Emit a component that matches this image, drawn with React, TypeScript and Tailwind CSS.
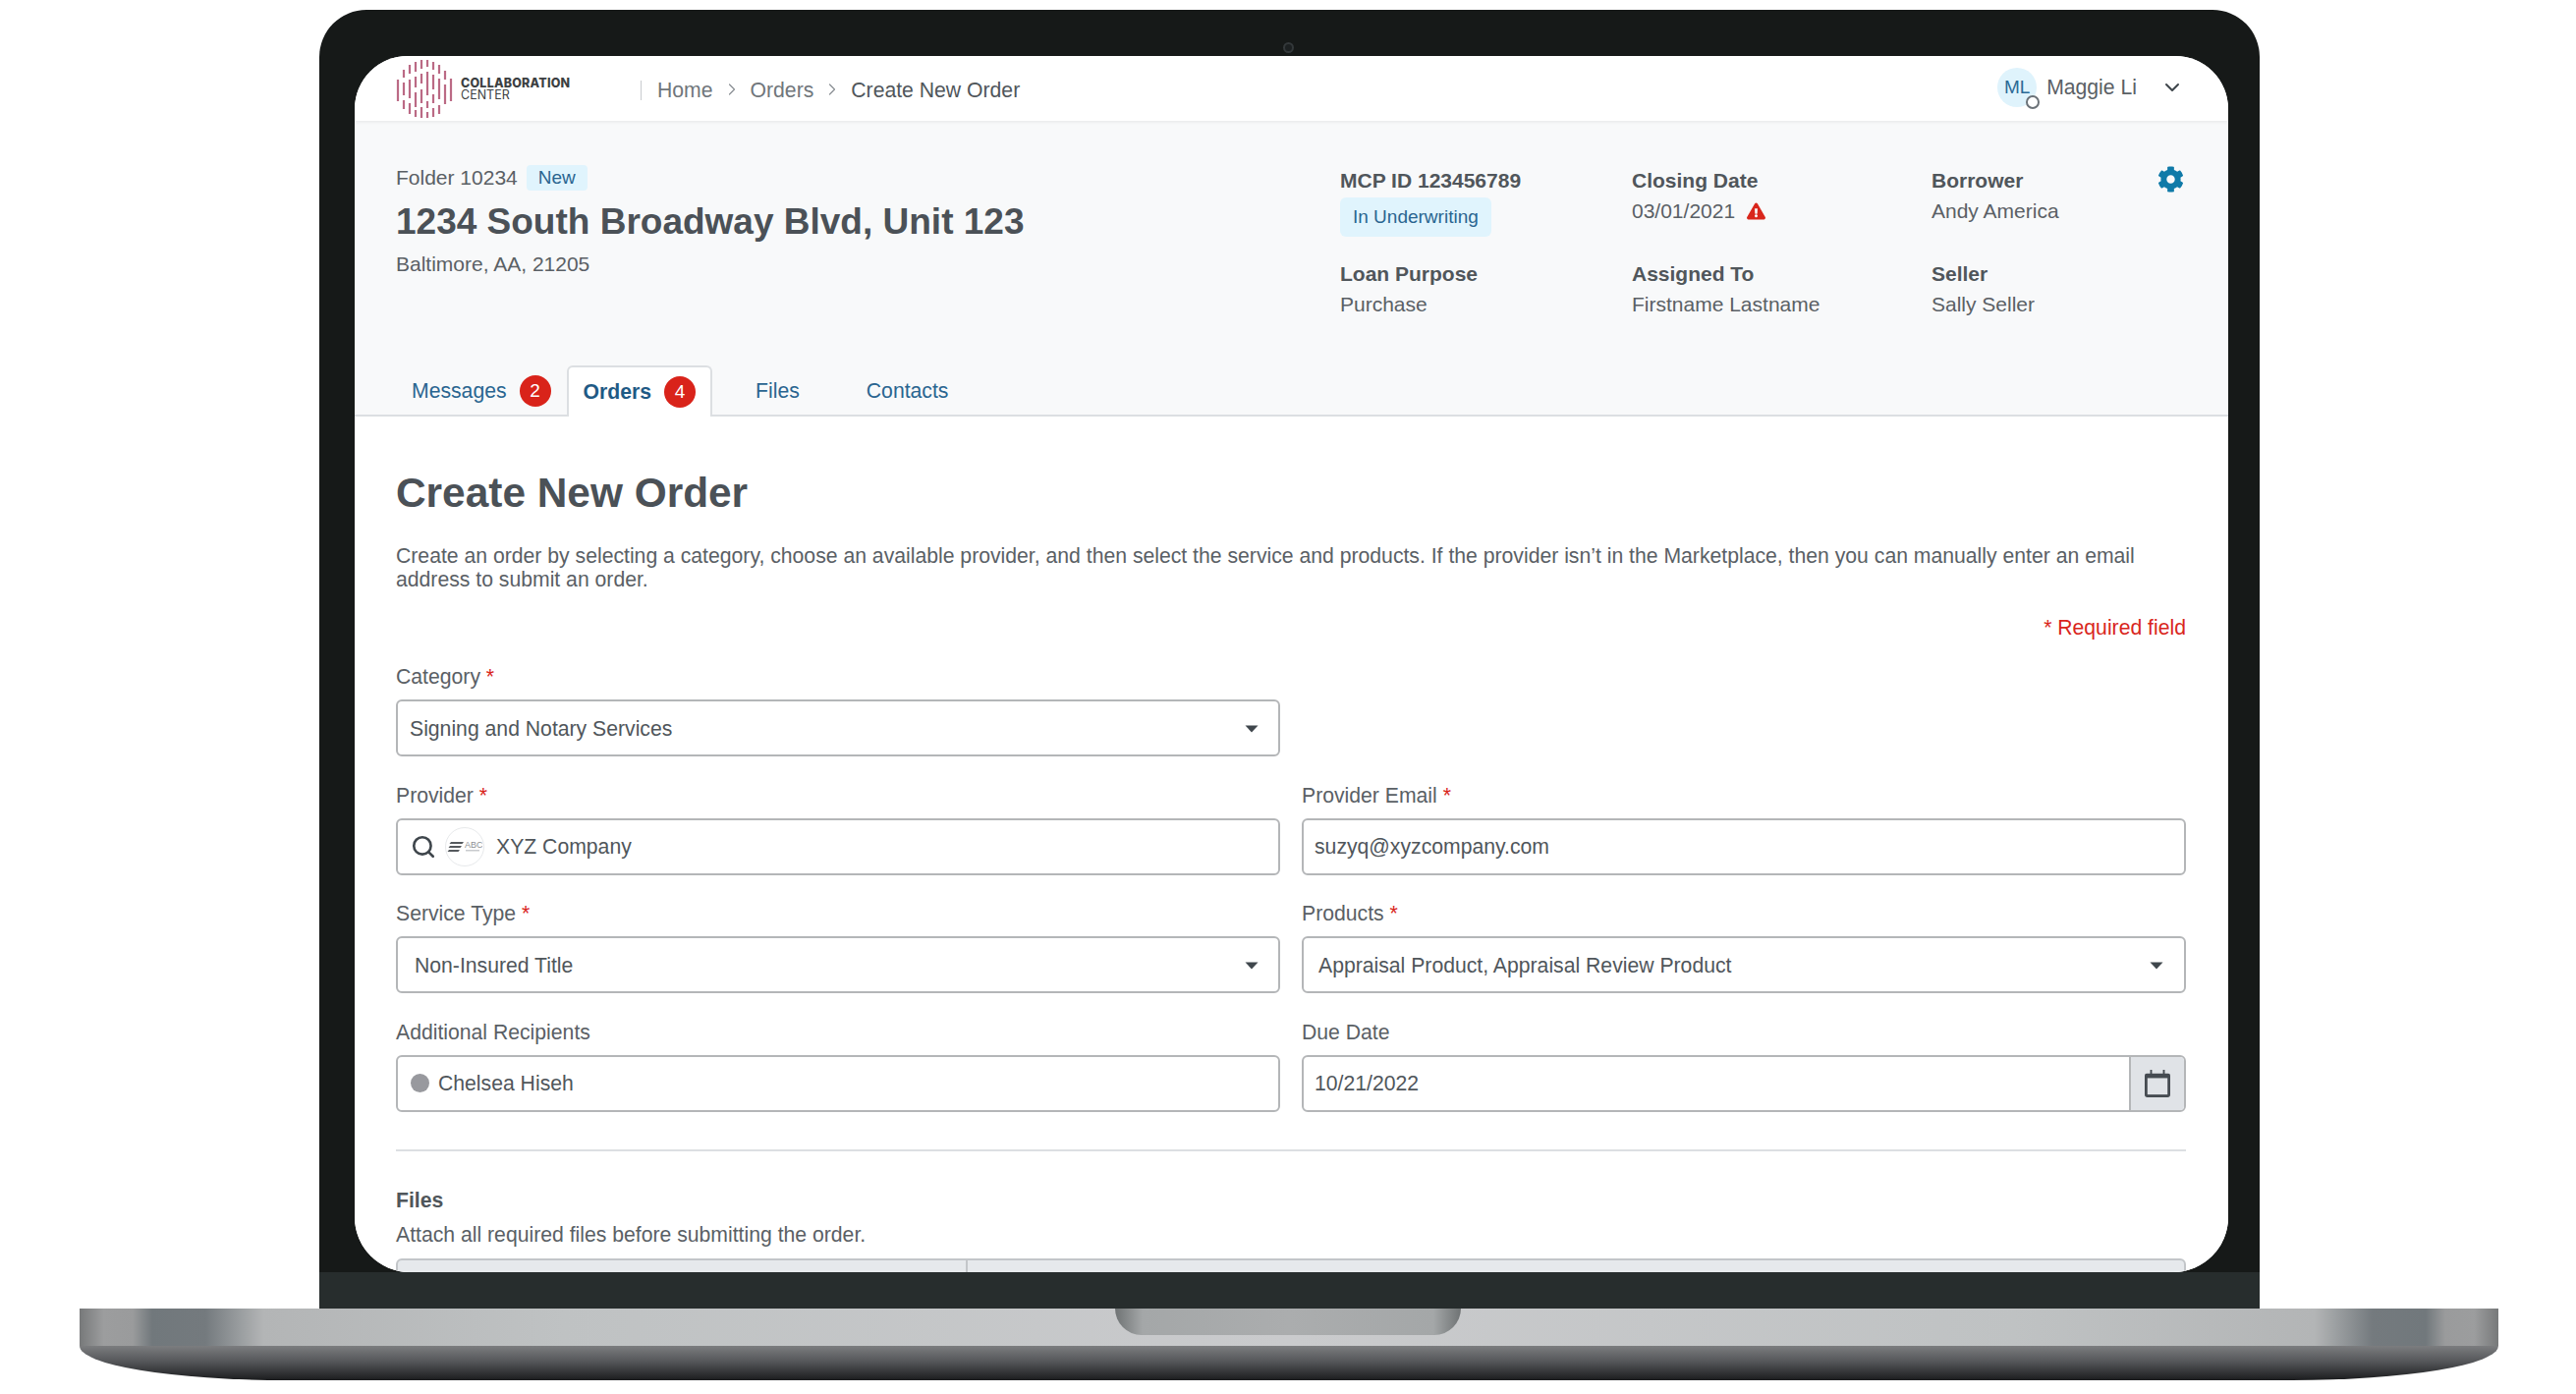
import React from "react";
import { ChevronDown, ChevronRight, Search } from "lucide-react";
import { FaCog, FaExclamationTriangle } from "react-icons/fa";

const logoColumns: [number, number[][]][] = [
  [2, [[20, 42]]],
  [8, [[10, 18], [23, 36], [41, 50]]],
  [14, [[5, 14], [20, 39], [44, 55]]],
  [20, [[2, 12], [17, 28], [33, 48], [51, 58]]],
  [26, [[0, 9], [14, 24], [30, 44], [48, 59]]],
  [32, [[0, 7], [12, 36], [42, 49], [53, 59]]],
  [38, [[2, 10], [15, 30], [35, 44], [49, 58]]],
  [44, [[5, 14], [19, 40], [46, 55]]],
  [50, [[11, 20], [25, 45]]],
  [56, [[19, 42]]],
];

function Logo() {
  return (
    <svg width="58" height="60" viewBox="0 0 58 60" className="shrink-0 mt-[2px]">
      {logoColumns.map(([x, segs]) =>
        segs.map(([a, b], i) => (
          <line key={`${x}-${i}`} x1={x} x2={x} y1={a} y2={b} stroke="#bb6a85" strokeWidth="2.2" />
        ))
      )}
    </svg>
  );
}

function Caret() {
  return (
    <svg width="14" height="8" viewBox="0 0 14 8" className="shrink-0">
      <path d="M0.5 0.5h13L7 7.5z" fill="#3f464c" />
    </svg>
  );
}

function Req() {
  return <span className="text-[#d9261c]"> *</span>;
}

function Field({ label, required, children }: { label: string; required?: boolean; children: React.ReactNode }) {
  return (
    <div className="flex flex-col">
      <div className="h-[24px] leading-[24px] mb-[11px] text-[21.2px] text-[#5a6065]">
        {label}
        {required && <Req />}
      </div>
      {children}
    </div>
  );
}

function Box({ className, children }: { className?: string; children: React.ReactNode }) {
  return (
    <div
      className={`h-[58px] flex items-center bg-white border-2 border-[#b4b6b8] rounded-[6px] text-[21.2px] text-[#50565b] ${className ?? ""}`}
    >
      {children}
    </div>
  );
}

function Meta({ label, children }: { label: string; children: React.ReactNode }) {
  return (
    <div className="flex flex-col">
      <div className="h-[24px] leading-[24px] font-bold text-[21px] text-[#50565b]">{label}</div>
      <div className="mt-[7px] text-[21px] leading-[24px] text-[#5a6065]">{children}</div>
    </div>
  );
}

function Badge({ n }: { n: number }) {
  return (
    <span className="w-[32px] h-[32px] rounded-full bg-[#d9231a] text-white text-[19px] font-normal flex items-center justify-center">
      {n}
    </span>
  );
}

export default function App() {
  return (
    <div
      className="w-[2622px] h-[1419px] bg-white overflow-hidden flex flex-col pt-[10px]"
      style={{ fontFamily: '"Liberation Sans", Arial, sans-serif' }}
    >
      {/* lid */}
      <div className="relative ml-[325px] w-[1975px] h-[1322px] bg-[#161918] rounded-t-[48px] flex flex-col overflow-hidden">
        <div className="absolute left-[981px] top-[33px] w-[11px] h-[11px] rounded-full border-2 border-[#33383a] bg-[#1c2021]" />
        <div className="mt-[47px] mx-[36px] w-[1907px] h-[1238px] bg-white rounded-t-[54px] rounded-b-[56px] overflow-hidden flex flex-col">
          {/* nav */}
          <div className="h-[66px] shrink-0 flex items-center bg-white pl-[42px] pr-[45px] shadow-[0_1px_4px_rgba(0,0,0,0.08)] z-10">
            <Logo />
            <div className="ml-[8px] mt-[2px] flex flex-col font-['Inter'] text-[#3c3f42] leading-[12px] w-[180px]">
              <span className="font-extrabold text-[12.5px] tracking-[0.2px]">COLLABORATION</span>
              <span className="text-[12.5px]">CENTER</span>
            </div>
            <div className="ml-[3px] mt-[3px] w-[1px] h-[20px] bg-[#c9cccf]" />
            <div className="ml-[16px] mt-[3px] flex items-center text-[21.2px] text-[#70767b]">
              <span>Home</span>
              <ChevronRight className="mx-[9px] w-[20px] h-[20px] text-[#8b9095]" strokeWidth={1.5} />
              <span>Orders</span>
              <ChevronRight className="mx-[9px] w-[20px] h-[20px] text-[#8b9095]" strokeWidth={1.5} />
              <span className="text-[#50565b]">Create New Order</span>
            </div>
            <div className="ml-auto flex items-center pb-[2px]">
              <div className="relative w-[40px] h-[40px] rounded-full bg-[#dff3fc] text-[#2b6a96] text-[19px] flex items-center justify-center">
                ML
                <span className="absolute right-[-3px] bottom-[-2px] w-[14px] h-[14px] rounded-full bg-white border-2 border-[#6b7278]" />
              </div>
              <span className="ml-[10px] text-[21.2px] text-[#5a6065]">Maggie Li</span>
              <ChevronDown className="ml-[24px] w-[24px] h-[24px] text-[#3f464c]" strokeWidth={2} />
            </div>
          </div>

          {/* folder header */}
          <div className="h-[301px] shrink-0 bg-[#f8f9fa] border-b-2 border-[#dcdfe2] flex flex-col justify-between">
            <div className="pt-[44px] pl-[42px] pr-[45px] flex">
              <div className="w-[961px] shrink-0 flex flex-col">
                <div className="flex items-center h-[28px]">
                  <span className="text-[21px] text-[#5a6065]">Folder 10234</span>
                  <span className="ml-[9px] h-[26px] px-[12px] rounded-[4px] bg-[#e0f4fd] text-[#2a6590] text-[19px] flex items-center">
                    New
                  </span>
                </div>
                <h1 className="mt-[9px] h-[44px] leading-[44px] text-[37px] font-bold text-[#4b5157]">
                  1234 South Broadway Blvd, Unit 123
                </h1>
                <div className="mt-[9px] text-[21px] leading-[24px] text-[#5a6065]">Baltimore, AA, 21205</div>
              </div>
              <div className="flex-1 grid grid-cols-[297px_305px_1fr] gap-y-[26px] pt-[5px]">
                <div className="flex flex-col">
                  <div className="h-[24px] leading-[24px] font-bold text-[21px] text-[#50565b]">MCP ID 123456789</div>
                  <span className="mt-[5px] self-start h-[40px] px-[13px] rounded-[6px] bg-[#e0f4fd] text-[#2a6590] text-[19px] flex items-center">
                    In Underwriting
                  </span>
                </div>
                <Meta label="Closing Date">
                  <span className="flex items-center">
                    03/01/2021
                    <FaExclamationTriangle className="ml-[12px] w-[19px] h-[18px] text-[#d9261c]" />
                  </span>
                </Meta>
                <div className="relative">
                  <Meta label="Borrower">Andy America</Meta>
                  <FaCog className="absolute right-[0px] top-[-3px] w-[27px] h-[27px] text-[#0f7aa8]" />
                </div>
                <Meta label="Loan Purpose">Purchase</Meta>
                <Meta label="Assigned To">Firstname Lastname</Meta>
                <Meta label="Seller">Sally Seller</Meta>
              </div>
            </div>
            <div className="pl-[42px] flex items-end h-[52px] mb-[-2px] text-[21.2px] text-[#2a6590]">
              <div className="h-full px-[16px] flex items-center gap-[13px]">
                <span>Messages</span>
                <Badge n={2} />
              </div>
              <div className="h-full px-[15px] flex items-center gap-[13px] bg-white border-2 border-b-0 border-[#dcdfe2] rounded-t-[6px] font-bold text-[#1f5a85]">
                <span>Orders</span>
                <Badge n={4} />
              </div>
              <div className="h-full ml-[28px] px-[16px] flex items-center">Files</div>
              <div className="h-full ml-[36px] px-[16px] flex items-center">Contacts</div>
            </div>
          </div>

          {/* content */}
          <div className="flex-1 bg-white pl-[42px] pr-[43px] pt-[54px] overflow-hidden">
            <h2 className="h-[48px] leading-[48px] text-[42.4px] font-bold text-[#4b5157]">Create New Order</h2>
            <p className="mt-[28px] text-[21.2px] leading-[23.5px] text-[#5a6065]">
              Create an order by selecting a category, choose an available provider, and then select the service and products. If the provider isn’t in the Marketplace, then you can manually enter an email address to submit an order.
            </p>
            <div className="mt-[26px] h-[24px] leading-[24px] text-right text-[21.2px] text-[#d9261c]">* Required field</div>

            <div className="mt-[26px] grid grid-cols-2 gap-x-[22px] gap-y-[27.5px]">
              <Field label="Category" required>
                <Box className="pl-[12px] pr-[20px] pt-[1px] justify-between">
                  <span>Signing and Notary Services</span>
                  <Caret />
                </Box>
              </Field>
              <div />
              <Field label="Provider" required>
                <Box className="pl-[13px] pt-[1px]">
                  <Search className="w-[26px] h-[26px] text-[#3f464c]" strokeWidth={2.4} />
                  <span className="ml-[9px] w-[40px] h-[40px] rounded-full border border-[#e7e9eb] flex items-center justify-center">
                    <svg width="36" height="16" viewBox="0 0 36 16">
                      <path d="M4 3h13l-1.5 2H2.5zM3 7h12l-1.5 2H1.5zM2 11h11l-1.5 2H0.5z" fill="#55595d" />
                      <text x="18" y="9" fontSize="9" fill="#8c9094" fontFamily="Liberation Sans">ABC</text>
                      <rect x="19" y="11" width="14" height="1.5" fill="#c9cbce" />
                    </svg>
                  </span>
                  <span className="ml-[12px]">XYZ Company</span>
                </Box>
              </Field>
              <Field label="Provider Email" required>
                <Box className="pl-[11px] pt-[1px]">suzyq@xyzcompany.com</Box>
              </Field>
              <Field label="Service Type" required>
                <Box className="pl-[17px] pr-[20px] pt-[1px] justify-between">
                  <span>Non-Insured Title</span>
                  <Caret />
                </Box>
              </Field>
              <Field label="Products" required>
                <Box className="pl-[15px] pr-[21px] pt-[1px] justify-between">
                  <span>Appraisal Product, Appraisal Review Product</span>
                  <Caret />
                </Box>
              </Field>
              <Field label="Additional Recipients">
                <Box className="pl-[13px]">
                  <span className="w-[19px] h-[19px] rounded-full bg-[#98999e]" />
                  <span className="ml-[9px]">Chelsea Hiseh</span>
                </Box>
              </Field>
              <Field label="Due Date">
                <Box className="pl-[11px] overflow-hidden">
                  <span className="flex-1 pt-[1px]">10/21/2022</span>
                  <span className="w-[56px] h-full bg-[#e0e3e7] border-l-2 border-[#b4b6b8] flex items-center justify-center">
                    <svg width="26" height="30" viewBox="0 0 28 30">
                      <path d="M6 0h2v4h12V0h2v4h4a2 2 0 0 1 2 2v21a3 3 0 0 1-3 3H3a3 3 0 0 1-3-3V6a2 2 0 0 1 2-2h4z" fill="#454b51" />
                      <rect x="3" y="9" width="22" height="18" fill="#e0e3e7" />
                    </svg>
                  </span>
                </Box>
              </Field>
            </div>

            <div className="mt-[38px] h-[2px] bg-[#dcdfe2]" />
            <div className="mt-[38px] h-[24px] leading-[24px] text-[21.2px] font-bold text-[#50565b]">Files</div>
            <div className="mt-[11px] h-[24px] leading-[24px] text-[21.2px] text-[#5a6065]">
              Attach all required files before submitting the order.
            </div>
            <div className="mt-[12px] h-[30px] flex bg-[#e6e9ec] border-2 border-[#c3c6c9] rounded-t-[6px]">
              <div className="w-[580px] border-r-2 border-[#c3c6c9]" />
            </div>
          </div>
        </div>
        <div className="absolute left-0 right-0 bottom-0 h-[37px] bg-[#272d2d]" />
      </div>

      {/* base */}
      <div className="relative ml-[81px] w-[2462px] h-[73px] flex flex-col">
        <div className="h-[38px] bg-[linear-gradient(90deg,#77797a_0%,#9c9d9e_1%,#9a9b9c_2.2%,#71787c_3%,#747a7e_5.2%,#b3b5b6_7.6%,#bfc2c3_20%,#cacbcd_50%,#bfc2c3_80%,#b3b5b6_92.4%,#747a7e_94.8%,#71787c_97%,#9a9b9c_97.8%,#9c9d9e_99%,#77797a_100%)]" />
        <div className="h-[35px] bg-[linear-gradient(180deg,#7c7d7f_0%,#55575a_45%,#1b1c1e_100%)] rounded-bl-[210px_35px] rounded-br-[210px_35px]" />
        <div className="absolute left-[1054px] top-0 w-[352px] h-[27px] rounded-b-[28px] bg-[linear-gradient(90deg,#6f7374_0%,#a4a7a8_8%,#abadae_50%,#a4a7a8_92%,#6f7374_100%)]" />
      </div>
    </div>
  );
}
